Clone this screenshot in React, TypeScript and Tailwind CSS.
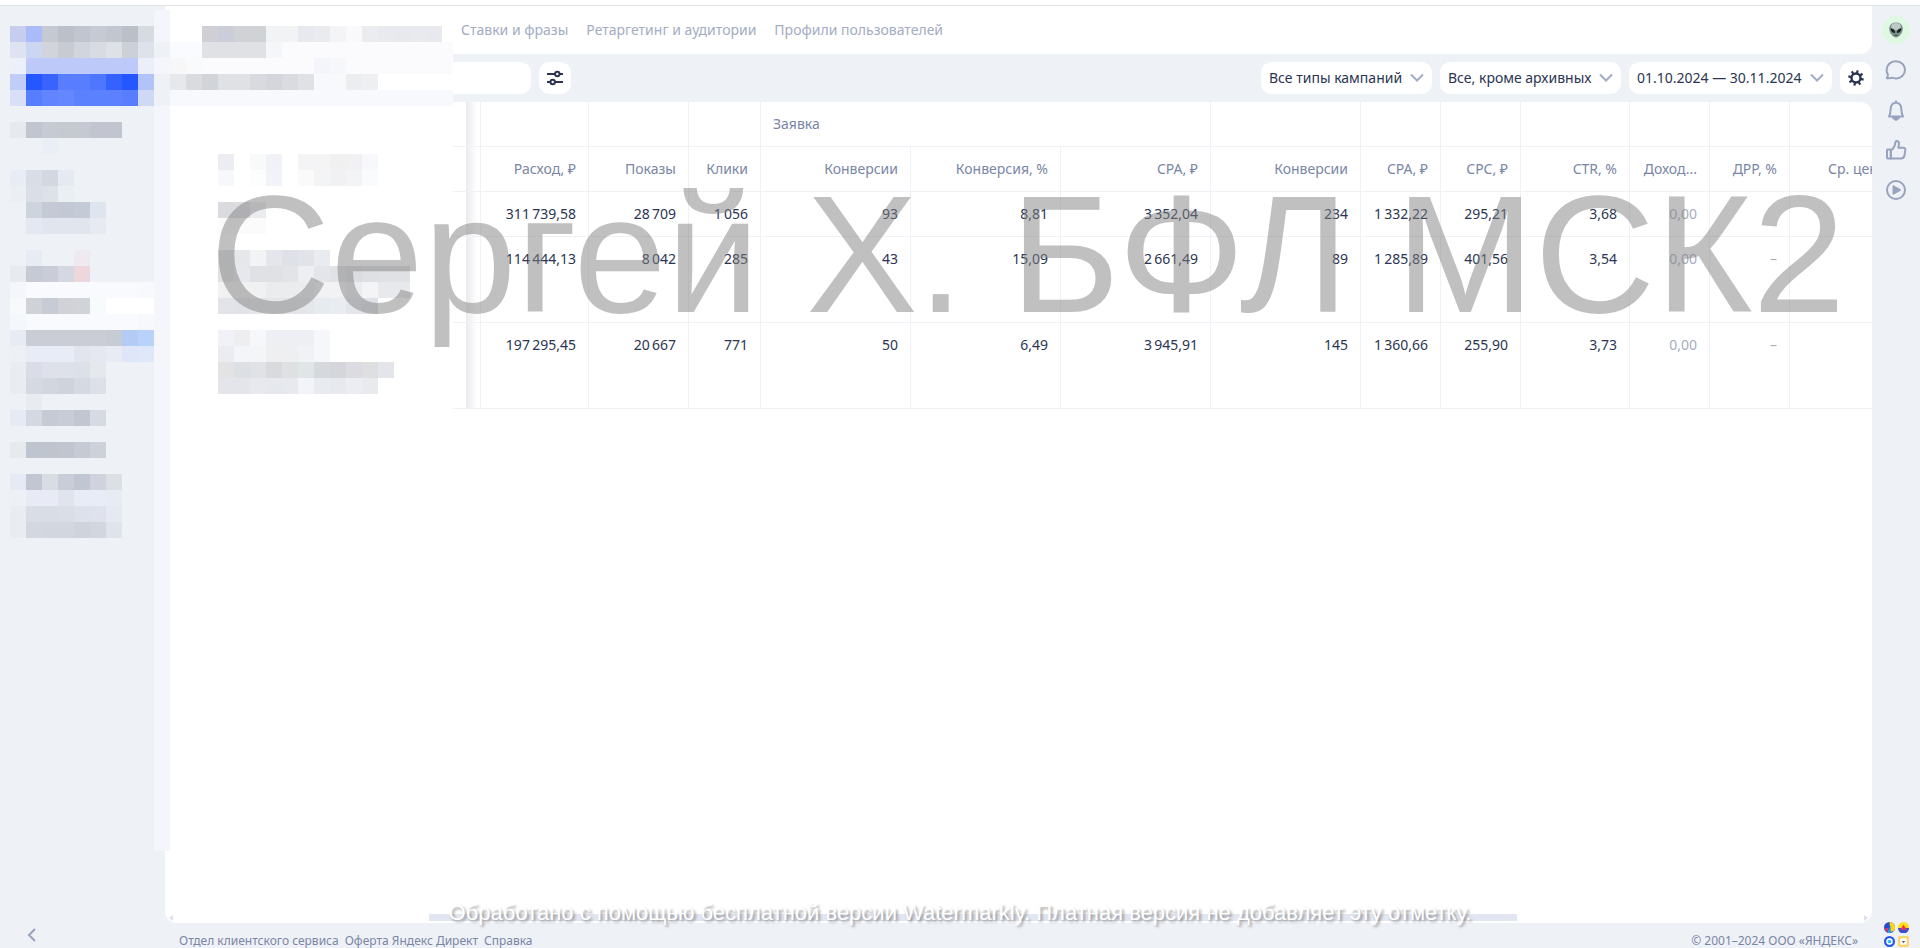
import React from "react";
import { clsx } from "clsx";

type MosaicRun = { row: number; col: number; colors: string[] };

const TABS = ["Ставки и фразы", "Ретаргетинг и аудитории", "Профили пользователей"];

const COLUMNS = [
  { label: "Расход, ₽", width: "w-[108px]" },
  { label: "Показы", width: "w-[100px]" },
  { label: "Клики", width: "w-[72px]" },
  { label: "Конверсии", width: "w-[150px]" },
  { label: "Конверсия, %", width: "w-[150px]" },
  { label: "CPA, ₽", width: "w-[150px]" },
  { label: "Конверсии", width: "w-[150px]" },
  { label: "CPA, ₽", width: "w-[80px]" },
  { label: "CPC, ₽", width: "w-[80px]" },
  { label: "CTR, %", width: "w-[109px]" },
  { label: "Доход...", width: "w-[80px]" },
  { label: "ДРР, %", width: "w-[80px]" },
];

// thin space between thousands
const ROWS = [
  {
    height: "h-[45px]",
    cells: ["311\u2009739,58", "28\u2009709", "1\u2009056", "93", "8,81", "3\u2009352,04", "234", "1\u2009332,22", "295,21", "3,68", "0,00", ""],
  },
  {
    height: "h-[86px]",
    cells: ["114\u2009444,13", "8\u2009042", "285", "43", "15,09", "2\u2009661,49", "89", "1\u2009285,89", "401,56", "3,54", "0,00", "–"],
  },
  {
    height: "h-[86px]",
    cells: ["197\u2009295,45", "20\u2009667", "771", "50", "6,49", "3\u2009945,91", "145", "1\u2009360,66", "255,90", "3,73", "0,00", "–"],
  },
];

const rep = (color: string, n: number) => Array<string>(n).fill(color);

const MOSAIC: MosaicRun[] = [
  { row: 1, col: 0, colors: ["#c7cdef", "#a9bcf7", "#c4c9d2", "#bbc0c9", "#c1c5cf", "#c6cad3", "#c1c6cf", "#babfc8", "#d6dae1"] },
  { row: 1, col: 12, colors: ["#cfcfd5", "#cbced8", "#d0d2d5", "#d0d3d6", "#f2f3f5", "#f2f3f4", "#e8e9ee", "#eaebef", "#f4f4f7", "#f9f9fb", "#ebecf0", "#e9eaee", "#e8e9ed", "#e9eaee", "#e8e9ee"] },
  { row: 2, col: 0, colors: ["#dfe2f1", "#ccd5f2", "#d1d5db", "#c8ccd2", "#d1d5dd", "#d8dbe2", "#dee2e6", "#ccd1d8", "#dee2ea", "#eef1f6", "#fafbfe", "#fafbfe", ...rep("#e0e1e5", 4), "#f5f6f9", ...rep("#fbfbfe", 11)] },
  { row: 3, col: 0, colors: ["#ecf0fa", ...rep("#bdcaf9", 7), "#eaeff9"] },
  { row: 3, col: 10, colors: ["#f7f7f8", "#f9fafb", ...rep("#fbfbfe", 7), "#f4f5fb", "#f6f7fb", ...rep("#fbfbfe", 7)] },
  { row: 4, col: 0, colors: ["#c1cdf9", "#2457ff", "#3863ff", "#587dff", "#587dff", "#4f76ff", "#3561ff", "#2457ff", "#b1c3f9", "#eef1f6", "#e7e8eb", "#dadbdf", "#d1d4d9", "#e0e1e5", "#e0e1e5", "#d9dae0", "#d5d6dc", "#d9dbe1", "#e0e1e5", "#f8f9fc", "#f8f9fb", "#ecedf1", "#eeeff0"] },
  { row: 5, col: 0, colors: ["#d8dff6", "#577eff", "#6285ff", "#6487ff", "#5c81ff", "#5c81ff", "#5c80ff", "#587dff", "#cfd9f6", "#eef1f6", ...rep("#f7f9fd", 18)] },
  { row: 7, col: 0, colors: ["#e6e9ed", "#c0c5d0", "#c6cad3", "#c5cad1", "#c5c9d2", "#c2c5cf", "#c0c5cf"] },
  { row: 8, col: 2, colors: ["#eaeef6"] },
  { row: 9, col: 13, colors: ["#ecedf2", "", "#f8f9f9", "#f0f2f7", "", "#f4f4f6", "#f4f4f5", "#f0f0f1", "#f1f1f3", "#f7f8fb"] },
  { row: 10, col: 0, colors: ["#e8ecf5", "#d9dde6", "#d3d8e0", "#e5e9f1"] },
  { row: 10, col: 13, colors: ["#f7f8fb", "", "#fcfdfd", "#f2f3f8", "", "#fafafa", "#f3f4f5", "#f1f1f3", "#f3f4f5", "#fafbfd"] },
  { row: 11, col: 0, colors: ["#ebeef2", "#dadee7", "#dde2e8", "#eaeff3"] },
  { row: 12, col: 1, colors: ["#cdd4de", "#c4c9d5", "#c3c8d5", "#c4cad6", "#dfe5ee"] },
  { row: 12, col: 13, colors: ["#dadbdf", "#dcdce0", "#ebecf0"] },
  { row: 13, col: 1, colors: ["#e4e8f2", ...rep("#e0e5ee", 3), "#e7ebf1"] },
  { row: 13, col: 13, colors: rep("#fbfbfb", 3) },
  { row: 15, col: 1, colors: ["#e7ebf4", "", "", "#eeeaf0"] },
  { row: 15, col: 13, colors: ["#dfe0e3", "#e6e7eb", "#f2f3f5", "#e4e6ec", "#dee2e8", "#e1e3e8", "#e8ecf1"] },
  { row: 16, col: 0, colors: ["#e7ebef", "#c6cad4", "#cacdd7", "#d3d8e2", "#edd6dc"] },
  { row: 16, col: 13, colors: ["#e0e1e2", "#e6e8ee", "#e0e1e5", "#e0e1e5", "#e2e4e8", "#eeeff3", "#e4e5ea", "#e0e2e6", "#dcdde0", "#dfe0e3", "#e0e1e4", "#e0e1e4"] },
  { row: 17, col: 0, colors: ["#f4f6fb", ...rep("#f8fafd", 7), "#f7f9fc"] },
  { row: 17, col: 13, colors: [...rep("#f0f1f2", 3), ...rep("#ebecee", 3), "#f2f2f4", "#f2f2f4", "#ebecf0", "#f4f4f6", "#e8e9ec", "#e8e9ec"] },
  { row: 18, col: 0, colors: ["#f7f9fb", "#cfd3d8", "#c7cbd5", "#d0d2d7", "#d0d3d7", "#f8fbfc", ...rep("#ffffff", 3)] },
  { row: 18, col: 13, colors: ["#e2e4e9", "#e2e3e8", ...rep("#e4e6ea", 4), "#e6ebf0", "#e9ecf1", "#e4e6ec", "#dfe1e6"] },
  { row: 19, col: 0, colors: ["#f4f7fb", ...rep("#f8fafd", 7), "#f7f8fb"] },
  { row: 20, col: 0, colors: ["#e7ebf4", ...rep("#cacdd6", 5), "#c7cbd4", "#b4cbf6", "#b8d2fa"] },
  { row: 20, col: 13, colors: ["#f1f2f7", "#eeeef0", "#f6f7fa", ...rep("#eeeff3", 3), "#f6f7fb"] },
  { row: 21, col: 0, colors: ["#edf0f5", ...rep("#e8ecf6", 3), "#e2e5ee", "#e5e8f1", "#e8ebf4", "#dee6f7", "#dee8f9"] },
  { row: 21, col: 13, colors: ["#ebecf1", "#f4f5f8", "#f4f5f6", "#efeff2", "#eeeff0", "#f1f2f5", "#f6f7fb"] },
  { row: 22, col: 0, colors: ["#e9edf2", "#dadde8", "#dee1ea", "#dce1ea", "#dce1e9", "#e5e8ec"] },
  { row: 22, col: 13, colors: ["#e3e3e3", "#dce0e5", "#e0e2e6", "#d9dade", "#dfe0e2", "#e0e5e8", "#d5d9dd", "#d5d6da", "#dbdbe1", "#dedfe0", "#e4e5ea"] },
  { row: 23, col: 0, colors: ["#e9edf2", "#d4d9e2", "#d2d6df", "#ced3dc", "#d4d9e2", "#dde0e9"] },
  { row: 23, col: 13, colors: ["#e3e5ea", "#e3e5ea", "#e8e9ee", "#e5e8ed", "#e8e9ee", "#f3f4f9", "#e8ecf0", "#e8e9ee", "#ecedf2", "#e9eaee"] },
  { row: 24, col: 1, colors: ["#e8ecf1"] },
  { row: 25, col: 0, colors: ["#e6eaf4", "#d3d8e1", "#c6cad4", "#c8ccd7", "#c2c6d0", "#d5dae3"] },
  { row: 27, col: 0, colors: ["#e6eaed", "#bfc5cf", "#c0c4cd", "#c1c5d0", "#c5cad3", "#cdd1da"] },
  { row: 29, col: 0, colors: ["#e6eaf4", "#c1c6d2", "#d8dce3", "#c9cdd7", "#c1c7d2", "#d0d3dd", "#dae0e4"] },
  { row: 30, col: 0, colors: ["#edf1f6", "#e8ebf6", "#e8ebf6", "#e0e4ed", "#e8ecf6", "#e8ecf6", "#e7ebf4"] },
  { row: 31, col: 0, colors: ["#e9edf2", "#d9dde6", "#d9dde6", "#d9dee7", "#dde1eb", "#dfe2ec", "#e5e9f2"] },
  { row: 32, col: 0, colors: ["#e9edf2", "#d3d7df", "#d2d6df", "#d2d6df", "#ced3dc", "#d2d6df", "#dfe3ec"] },
];

export default function App() {
  return (
    <div className="relative flex min-h-screen flex-col overflow-hidden bg-[#eef1f6] font-['Noto_Sans','Open_Sans',sans-serif] text-sm leading-5 text-[#2b3552]">
      <div className="h-1.5 shrink-0 border-b border-[#dfe0e2] bg-white" />

      <div className="flex flex-1">
        <aside className="flex w-[165px] shrink-0 flex-col justify-end px-5 pb-px">
          <button type="button" aria-label="Свернуть меню" className="flex size-6 items-center justify-center text-[#98a3bd]">
            <svg width="10" height="14" viewBox="0 0 10 14" fill="none" stroke="currentColor" strokeWidth="2">
              <path d="M8 1L2 7l6 6" />
            </svg>
          </button>
        </aside>

        <div className="flex min-w-0 flex-1 flex-col">
          <nav className="flex h-12 shrink-0 items-center gap-[18px] rounded-br-xl bg-white pl-[296px] text-[#a3acc3]">
            {TABS.map((tab) => (
              <a key={tab} href="#">
                {tab}
              </a>
            ))}
          </nav>

          <Toolbar />

          <main className="flex flex-1 flex-col justify-between overflow-hidden rounded-r-xl rounded-bl-xl bg-white">
            <StatsTable />
            <Scrollbar />
          </main>

          <footer className="flex shrink-0 gap-1.5 pt-[10px] pr-[14px] pl-[14px] text-xs leading-[15px] text-[#7a86a5]">
            <a href="#">Отдел клиентского сервиса</a>
            <a href="#">Оферта Яндекс Директ</a>
            <a href="#">Справка</a>
            <span className="ml-auto">© 2001–2024 ООО «ЯНДЕКС»</span>
          </footer>
        </div>

        <Rail />
      </div>

      <Mosaic />

      <p className="pointer-events-none absolute top-[171px] left-[210px] font-['Liberation_Sans',Arial,sans-serif] text-[167px] leading-none whitespace-nowrap text-[#818181]/50">
        Сергей Х. БФЛ МСК2
      </p>
      <p className="pointer-events-none absolute inset-x-0 bottom-[21px] text-center font-['Liberation_Sans',Arial,sans-serif] text-[22px] leading-7 whitespace-nowrap text-white [text-shadow:2px_2px_3px_rgb(0_0_0/0.4)]">
        Обработано с помощью бесплатной версии Watermarkly. Платная версия не добавляет эту отметку.
      </p>
    </div>
  );
}

function Toolbar() {
  return (
    <div className="flex h-12 shrink-0 items-center gap-2 pl-4">
      <input type="search" aria-label="Поиск" className="h-8 w-[350px] rounded-[10px] bg-white px-3 outline-none" />
      <button type="button" aria-label="Фильтры" className="flex size-8 items-center justify-center rounded-[10px] bg-white">
        <svg width="16" height="16" viewBox="0 0 16 16" fill="none" stroke="currentColor" strokeWidth="2">
          <path d="M0 4h8M12.500 4H16M0 12h3.500M8 12h8" />
          <circle cx="10.300" cy="4" r="2.200" />
          <circle cx="5.700" cy="12" r="2.200" />
        </svg>
      </button>

      <div className="ml-auto flex gap-2">
        <FilterSelect label="Тип кампаний" value="Все типы кампаний" width="w-[171px]" />
        <FilterSelect label="Статус кампаний" value="Все, кроме архивных" width="w-[181px]" />
        <button type="button" className="flex h-8 w-[203px] items-center justify-between rounded-[10px] bg-white px-2 whitespace-nowrap">
          01.10.2024 — 30.11.2024
          <Chevron />
        </button>
        <button type="button" aria-label="Настройки" className="flex size-8 items-center justify-center rounded-[10px] bg-white">
          <Gear />
        </button>
      </div>
    </div>
  );
}

function FilterSelect({ label, value, width }: { label: string; value: string; width: string }) {
  return (
    <div className={clsx("relative flex items-center", width)}>
      <select aria-label={label} className="h-8 w-full appearance-none rounded-[10px] bg-white pr-6 pl-2 outline-none">
        <option>{value}</option>
      </select>
      <Chevron className="pointer-events-none absolute right-2" />
    </div>
  );
}

function Chevron({ className }: { className?: string }) {
  return (
    <svg width="14" height="10" viewBox="0 0 14 10" fill="none" stroke="#a3acc6" strokeWidth="2" className={className}>
      <path d="M1 1.500l6 6 6-6" />
    </svg>
  );
}

function Gear() {
  return (
    <svg width="16" height="16" viewBox="0 0 16 16" fill="none" stroke="currentColor">
      <circle cx="8" cy="8" r="4.500" strokeWidth="2.400" />
      {[12, 57, 102, 147, 192, 237, 282, 327].map((a) => (
        <path key={a} d="M8 0.200v3.300" strokeWidth="2.200" transform={`rotate(${a} 8 8)`} />
      ))}
    </svg>
  );
}

function StatsTable() {
  return (
    <table className="w-full table-fixed border-separate border-spacing-0 text-right whitespace-nowrap">
      <colgroup>
        <col className="w-[301px]" />
        <col className="w-[15px]" />
        {COLUMNS.map((c, i) => (
          <col key={i} className={c.width} />
        ))}
        <col />
      </colgroup>
      <thead className="text-[#7a86a5]">
        <tr className="h-[45px]">
          <Stub />
          <Th />
          <Th />
          <Th />
          <th colSpan={3} scope="colgroup" className="border-r border-b border-[#eef1f6] px-3 text-left font-normal">
            Заявка
          </th>
          <Th />
          <Th />
          <Th />
          <Th />
          <Th />
          <Th />
          <th className="border-b border-[#eef1f6]" />
        </tr>
        <tr className="h-[45px]">
          <Stub />
          {COLUMNS.map((c, i) => (
            <Th key={i}>{c.label}</Th>
          ))}
          <th scope="col" className="overflow-hidden border-b border-[#eef1f6] pl-[38px] text-left font-normal">
            Ср. цена
          </th>
        </tr>
      </thead>
      <tbody>
        {ROWS.map((row, i) => (
          <tr key={i} className={row.height}>
            <Stub />
            {row.cells.map((cell, j) => (
              <td
                key={j}
                className={clsx("border-r border-b border-[#eef1f6] px-3 pt-3 align-top", j > 9 && "text-[#a5adbf]")}
              >
                {cell}
              </td>
            ))}
            <td className="border-b border-[#eef1f6]" />
          </tr>
        ))}
      </tbody>
    </table>
  );
}

// pinned column and the shadow it casts on the scrolled part
function Stub() {
  return (
    <>
      <td className="border-b border-[#eef1f6]" />
      <td className="border-r border-b border-[#eef1f6] bg-linear-to-r from-[#ebebef] to-white to-80%" />
    </>
  );
}

function Th({ children }: { children?: React.ReactNode }) {
  return (
    <th scope="col" className="border-r border-b border-[#eef1f6] px-3 font-normal">
      {children}
    </th>
  );
}

function Scrollbar() {
  return (
    <div className="mb-0.5 flex h-[7px] items-center px-1 text-[#dde1ec]">
      <svg width="4" height="6" viewBox="0 0 4 6" fill="currentColor">
        <path d="M4 0v6L0 3z" />
      </svg>
      <div className="mr-[347px] ml-[256px] h-[7px] flex-1 bg-[#e2e6f0]" />
      <svg width="4" height="6" viewBox="0 0 4 6" fill="currentColor">
        <path d="M0 0v6l4-3z" />
      </svg>
    </div>
  );
}

function Rail() {
  return (
    <aside className="flex w-12 shrink-0 flex-col items-center text-[#98a3bd]">
      <button type="button" aria-label="Профиль" className="mt-2.5 flex size-7 items-center justify-center rounded-full bg-[#dff8e2]">
        <svg width="16" height="16" viewBox="0 0 16 16">
          <path d="M8 .5c4.200 0 6.800 2.700 6.800 6.300 0 4-3.600 8.700-6.800 8.700S1.200 10.800 1.200 6.800C1.200 3.200 3.800.5 8 .5z" fill="#7d918c" />
          <path d="M8 1c3 0 4.800 1.500 4.800 3.500S10.500 8 8 8 3.200 6.500 3.200 4.500 5 1 8 1z" fill="#bcc9c6" />
          <path d="M2.600 6.200c2.600.2 4.500 1.800 4.600 4.700-2.800 0-4.700-1.700-4.600-4.700zM13.400 6.200c-2.600.2-4.500 1.800-4.600 4.700 2.800 0 4.700-1.700 4.600-4.700z" fill="#16201f" />
          <path d="M6.500 13.200h3" stroke="#33413e" />
        </svg>
      </button>

      <div className="mt-3.5 flex flex-col gap-4">
        <RailButton label="Чат">
          <path d="M2.800 20.200c.8-1.200 1.100-2.400 1.100-3.700C3 15.200 2.600 13.600 2.600 12c0-5 4-8.800 9.200-8.800S21 7 21 11.800s-4 8.600-9.200 8.600c-1.300 0-2.600-.2-3.700-.7-1.500.7-3.300.8-5.300.5z" />
        </RailButton>
        <RailButton label="Уведомления">
          <path d="M5 18.600c1.400-2.200 1.400-4 1.600-7.400C6.900 7 9 4.800 12 4.800s5.100 2.200 5.400 6.400c.2 3.400.2 5.200 1.600 7.400z" />
          <path d="M12 2.500v2.500" />
          <path d="M9 20h6l-3 1.800z" />
        </RailButton>
        <RailButton label="Отзыв">
          <path d="M3.800 11.500h3v9h-3c-.6 0-.8-.4-.8-1v-7c0-.6.200-1 .8-1z" />
          <path d="M6.800 12.500c2.600-1.600 4-4.200 4.600-8 .2-1.400.8-1.700 1.600-1.600 1.700.2 2.200 1.900 1.900 3.600l-.5 3.200h5c1.400 0 2 .9 1.900 2.200l-.7 5.100c-.4 2.500-1.600 3.500-3.800 3.500H6.800z" />
        </RailButton>
        <RailButton label="Обучение">
          <circle cx="12" cy="12" r="9" />
          <path d="M9.500 8.300v7.400l6.500-3.700z" fill="currentColor" />
        </RailButton>
      </div>

      <div className="mt-auto grid grid-cols-2 gap-[3px] pb-px">
        <svg width="11" height="11" viewBox="0 0 10 10">
          <circle cx="5" cy="5" r="5" fill="#2a4bd0" />
          <path d="M5 0a5 5 0 0 1 4 8L6 9z" fill="#ffd60a" />
          <path d="M6 3v6.900A5 5 0 0 1 3 9.500z" fill="#18a8f5" />
          <path d="M.4 6L3 9.500l1-4z" fill="#f5325c" />
        </svg>
        <svg width="11" height="11" viewBox="0 0 10 10">
          <circle cx="5" cy="5" r="5" fill="#ffdd1a" />
          <path d="M0 5.500h10a5 5 0 0 1-10 0z" fill="#3a4fd0" />
          <path d="M5 2.500L8 7H2z" fill="#f0334f" />
        </svg>
        <svg width="11" height="11" viewBox="0 0 10 10">
          <circle cx="5" cy="5" r="4" fill="#36b4ff" stroke="#2b52e8" strokeWidth="2" />
          <circle cx="5" cy="5" r="2.300" fill="none" stroke="#fff" strokeWidth="1.200" />
        </svg>
        <svg width="11" height="11" viewBox="0 0 10 10">
          <rect width="10" height="10" rx="2" fill="#fcd56a" />
          <rect x="2" y="2" width="6" height="6" rx="1" fill="#fff" />
          <path d="M3.500 4.500h3L5 6.500z" fill="#5a5f6e" />
        </svg>
      </div>
    </aside>
  );
}

function RailButton({ label, children }: { label: string; children: React.ReactNode }) {
  return (
    <button type="button" aria-label={label} className="size-6">
      <svg width="24" height="24" viewBox="0 0 24 24" fill="none" stroke="currentColor" strokeWidth="2" strokeLinejoin="round">
        {children}
      </svg>
    </button>
  );
}

// 16px censor tiles over the account menu and campaign names
function Mosaic() {
  return (
    <svg
      width="453"
      height="851"
      shapeRendering="crispEdges"
      aria-hidden="true"
      className="pointer-events-none absolute top-0 left-0"
    >
      <rect x="154" y="10" width="16" height="841" fill="#f4f6fb" />
      <rect x="170" y="10" width="283" height="841" fill="#ffffff" />
      {MOSAIC.map((run) =>
        run.colors.map(
          (color, i) =>
            color && (
              <rect
                key={`${run.row}-${run.col + i}`}
                x={10 + (run.col + i) * 16}
                y={10 + run.row * 16}
                width="16"
                height="16"
                fill={color}
              />
            )
        )
      )}
    </svg>
  );
}
